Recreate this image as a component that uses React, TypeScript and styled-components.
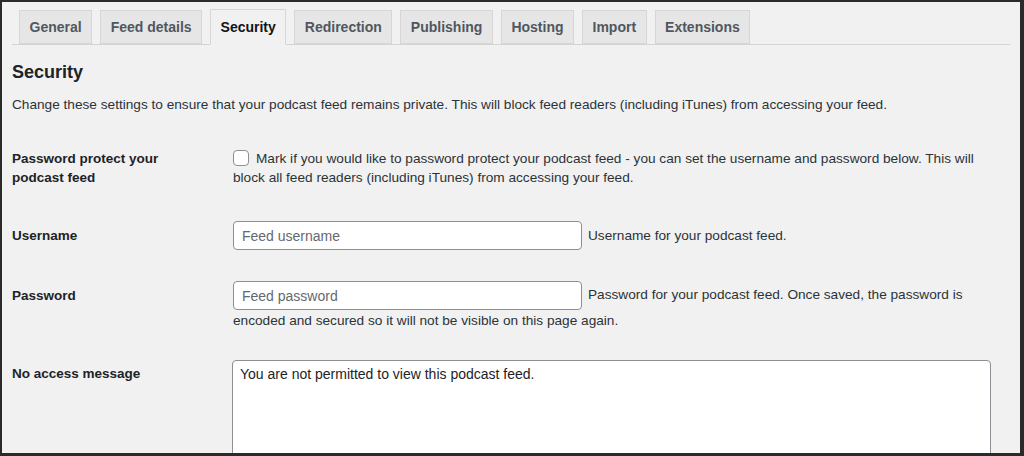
import styled, { createGlobalStyle } from "styled-components";

const GlobalStyle = createGlobalStyle`
  html, body {
    margin: 0;
    padding: 0;
    background: #f1f1f1;
  }
  * { box-sizing: border-box; }
`;

const Frame = styled.div`
  width: 1024px;
  height: 456px;
  overflow: hidden;
  background: #f1f1f1;
  border-style: solid;
  border-color: #2a2a2a;
  border-width: 2px 4px 3px 2px;
  padding: 8px 10px 0 10px;
  font-family: "Liberation Sans", Arial, sans-serif;
  color: #2c3338;
`;

const TabBar = styled.div`
  display: flex;
  align-items: flex-end;
  gap: 8px;
  padding-left: 7px;
  width: 998px;
  height: 35px;
  border-bottom: 1px solid #d4d4d4;
`;

const Tab = styled.div<{ $active?: boolean }>`
  height: ${(p) => (p.$active ? 36 : 34)}px;
  margin-bottom: ${(p) => (p.$active ? -1 : 0)}px;
  padding: 0 9.5px;
  display: flex;
  align-items: center;
  font-size: 14px;
  font-weight: 700;
  color: ${(p) => (p.$active ? "#101517" : "#50575e")};
  background: ${(p) => (p.$active ? "#f1f1f1" : "#e6e6e6")};
  border: 1px solid #d6d6d6;
  border-bottom-color: ${(p) => (p.$active ? "#f1f1f1" : "#d6d6d6")};
`;

const Heading = styled.h2`
  margin: 15px 0 0;
  font-size: 18px;
  line-height: 24px;
  font-weight: 600;
  color: #1d2327;
`;

const Intro = styled.p`
  margin: 11px 0 0;
  font-size: 13.65px;
  line-height: 20px;
  color: #2c3338;
`;

const Row = styled.div<{ $gap: number }>`
  display: grid;
  grid-template-columns: 221px 765px;
  align-items: start;
  margin-top: ${(p) => p.$gap}px;
`;

const Label = styled.div<{ $lh: number }>`
  font-size: 13.5px;
  font-weight: 700;
  line-height: ${(p) => p.$lh}px;
  color: #1d2327;
  padding-right: 20px;
`;

const Field = styled.div`
  font-size: 13.65px;
  line-height: 19px;
  color: #2c3338;
`;

const WrapField = styled(Field)`
  line-height: 22px;
`;

const Check = styled.span`
  display: inline-block;
  width: 16px;
  height: 16px;
  margin: 0 7px 0 0;
  vertical-align: -3px;
  border: 1px solid #8c8f94;
  border-radius: 4px;
  background: #fff;
`;

const Input = styled.input`
  width: 349px;
  height: 29px;
  padding: 0 8px;
  margin-right: 6px;
  vertical-align: middle;
  border: 1px solid #8c8f94;
  border-radius: 4px;
  background: #fff;
  font-family: inherit;
  font-size: 14px;
  color: #2c3338;
  &::placeholder {
    color: #646970;
  }
`;

const Inline = styled.div`
  display: flex;
  align-items: center;
  height: 29px;
`;

const TextArea = styled.textarea`
  display: block;
  width: 759px;
  height: 140px;
  margin-left: -1px;
  padding: 3px 7px;
  resize: none;
  border: 1px solid #8c8f94;
  border-radius: 4px;
  background: #fff;
  font-family: inherit;
  font-size: 14px;
  line-height: 20px;
  color: #1d2327;
`;

const tabs = [
  "General",
  "Feed details",
  "Security",
  "Redirection",
  "Publishing",
  "Hosting",
  "Import",
  "Extensions",
];

export default function App() {
  return (
    <>
      <GlobalStyle />
      <Frame>
        <TabBar>
          {tabs.map((t) => (
            <Tab key={t} $active={t === "Security"}>
              {t}
            </Tab>
          ))}
        </TabBar>

        <Heading>Security</Heading>
        <Intro>
          Change these settings to ensure that your podcast feed remains private. This will block
          feed readers (including iTunes) from accessing your feed.
        </Intro>

        <Row $gap={34}>
          <Label $lh={19}>
            Password protect your
            <br />
            podcast feed
          </Label>
          <Field>
            <Check />
            Mark if you would like to password protect your podcast feed - you can set the username
            and password below. This will block all feed readers (including iTunes) from accessing
            your feed.
          </Field>
        </Row>

        <Row $gap={34}>
          <Label $lh={29}>Username</Label>
          <Inline>
            <Input placeholder="Feed username" />
            <Field>Username for your podcast feed.</Field>
          </Inline>
        </Row>

        <Row $gap={31}>
          <Label $lh={29}>Password</Label>
          <WrapField>
            <Input placeholder="Feed password" />
            Password for your podcast feed. Once saved, the password is encoded and secured so it will
            not be visible on this page again.
          </WrapField>
        </Row>

        <Row $gap={28}>
          <Label $lh={28}>No access message</Label>
          <TextArea defaultValue="You are not permitted to view this podcast feed." />
        </Row>
      </Frame>
    </>
  );
}
